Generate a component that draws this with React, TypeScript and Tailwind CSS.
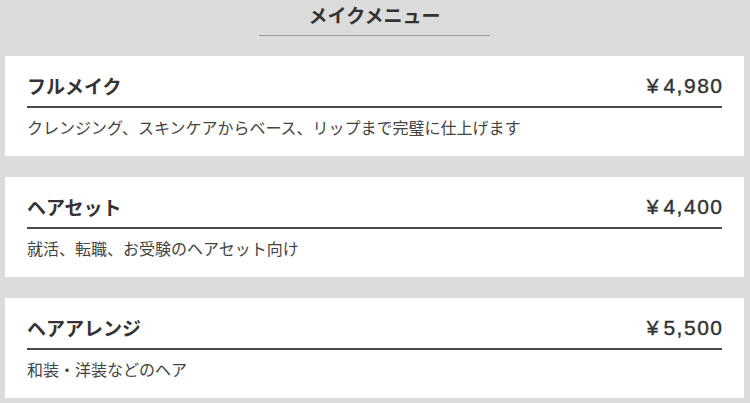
import React from "react";

const items = [
  { name: "フルメイク", price: "4,980", desc: "クレンジング、スキンケアからベース、リップまで完璧に仕上げます" },
  { name: "ヘアセット", price: "4,400", desc: "就活、転職、お受験のヘアセット向け" },
  { name: "ヘアアレンジ", price: "5,500", desc: "和装・洋装などのヘア" },
];

export default function App() {
  return (
    <div
      className="w-[750px] h-[403px] bg-[#dcdcdc] overflow-hidden pl-[5px] pr-[6px]"
      style={{ fontFamily: '"Noto Sans CJK JP", "Noto Sans", sans-serif' }}
    >
      <div className="flex justify-center">
        <div className="w-[231px] border-b border-[#9a9a9a] pt-[3px] pb-[8px] flex justify-center">
          <h1 className="text-[19px] leading-[24px] font-bold text-[#333]">メイクメニュー</h1>
        </div>
      </div>
      <div className="flex flex-col gap-[21px] mt-[20px]">
        {items.map((it) => (
          <div key={it.name} className="bg-white h-[100px] px-[22px] pt-[18px]">
            <div className="flex justify-between items-end border-b-2 border-[#4a4a4a] pb-[8px]">
              <span className="text-[19px] leading-[24px] font-bold text-[#333]">{it.name}</span>
              <span className="flex items-baseline text-[21px] leading-[24px] text-[#333] font-['Liberation_Sans',Arial,sans-serif] [-webkit-text-stroke:0.4px_#333]">
                <span className="mr-[5px]">¥</span>
                <span className="tracking-[1.5px] mr-[-1.5px]">{it.price}</span>
              </span>
            </div>
            <p className="mt-[8px] text-[16px] leading-[22px] text-[#444]">{it.desc}</p>
          </div>
        ))}
      </div>
    </div>
  );
}
